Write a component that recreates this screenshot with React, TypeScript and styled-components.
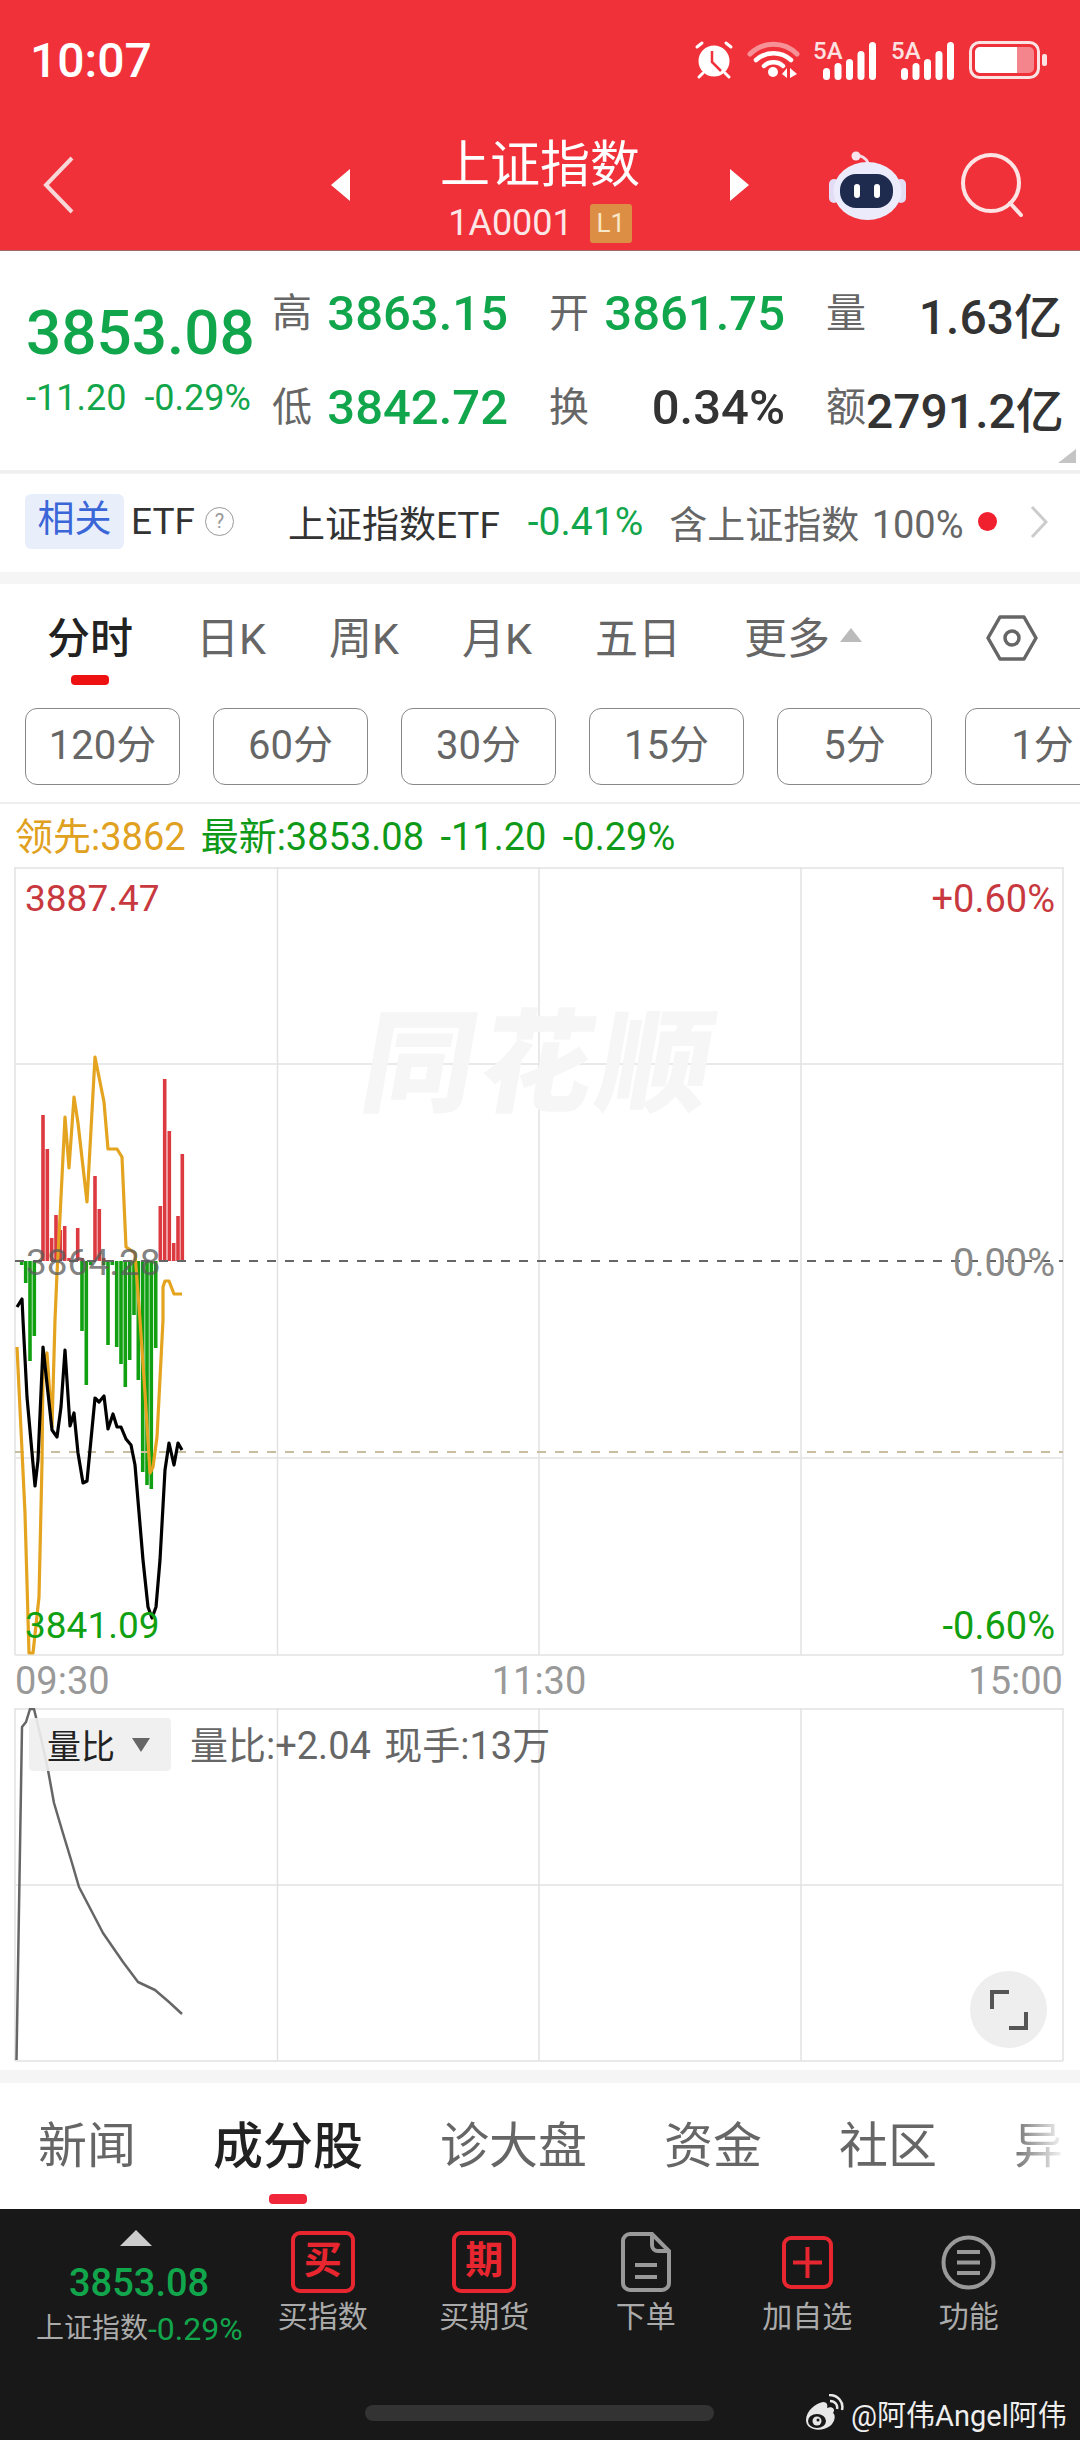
import styled, { createGlobalStyle } from "styled-components";

const FONT = `"Roboto", "Noto Sans CJK SC", sans-serif`;
const GREEN = "#12a64c";

const GlobalStyle = createGlobalStyle`
  html, body {
    margin: 0;
    padding: 0;
    background: #fff;
  }
  * {
    box-sizing: border-box;
  }
`;

const Page = styled.div`
  width: 1080px;
  height: 2440px;
  overflow: hidden;
  background: #fff;
  position: relative;
  font-family: ${FONT};
  color: #333;
`;

/* header */
const Header = styled.header`
  height: 251px;
  background: #f0313a;
  border-bottom: 1px solid #a06a6a;
  color: #fff;
`;

const StatusBar = styled.div`
  height: 120px;
  padding: 0 33px 0 30px;
  display: flex;
  align-items: center;
  justify-content: space-between;
`;

const Clock = styled.div`
  font-size: 48px;
  font-weight: 500;
`;

const StatusIcons = styled.div`
  display: flex;
  align-items: center;
  gap: 14px;

  svg {
    overflow: visible;
  }
`;

const Nav = styled.nav`
  height: 130px;
  display: grid;
  grid-template-columns: 1fr 418px 1fr;
  align-items: center;
`;

const BackSlot = styled.div`
  padding-left: 43px;
  display: flex;
`;

const NavCenter = styled.div`
  display: flex;
  align-items: center;
  justify-content: space-between;
`;

const NavTriangle = styled.div<{ $dir: "left" | "right" }>`
  width: 0;
  height: 0;
  border-top: 16px solid transparent;
  border-bottom: 16px solid transparent;
  ${(p) => (p.$dir === "left" ? "border-right: 19px solid #fff;" : "border-left: 19px solid #fff;")}
`;

const TitleBlock = styled.div`
  padding-top: 6px;
  display: flex;
  flex-direction: column;
  align-items: center;
`;

const Title = styled.div`
  font-size: 50px;
  line-height: 62px;
`;

const CodeRow = styled.div`
  margin-top: 8px;
  display: flex;
  align-items: center;
  gap: 17px;
  font-size: 36px;
  line-height: 39px;
  color: #fde6e6;
`;

const LevelBadge = styled.span`
  width: 42px;
  height: 39px;
  background: #dd8e45;
  border-radius: 3px;
  font-size: 26px;
  color: #f8e8c8;
  text-align: center;
`;

const NavRight = styled.div`
  display: flex;
  align-items: center;
  justify-content: flex-end;
  gap: 55px;
  padding-right: 57px;
`;

/* quote */
const Quote = styled.section`
  height: 222px;
  display: flex;
  position: relative;
  border-bottom: 3px solid #efefef;
`;

const PriceBlock = styled.div`
  width: 272px;
  padding: 47px 0 0 26px;
`;

const Price = styled.div`
  font-size: 62px;
  line-height: 70px;
  font-weight: 500;
  color: ${GREEN};
  white-space: nowrap;
`;

const ChangeRow = styled.div`
  margin-top: 10px;
  display: flex;
  gap: 18px;
  font-size: 36px;
  line-height: 40px;
  color: ${GREEN};
  white-space: nowrap;
`;

const QuoteGrid = styled.div`
  padding-top: 15px;
  display: grid;
  grid-template-columns: repeat(3, 236px);
  grid-auto-rows: 94px;
  column-gap: 41px;
`;

const QuoteCell = styled.div`
  display: flex;
  align-items: center;
  justify-content: space-between;
`;

const QuoteLabel = styled.span`
  margin-bottom: 6px;
  font-size: 40px;
  color: #666;
`;

const QuoteValue = styled.span<{ $dark?: boolean; $size?: number }>`
  font-size: ${(p) => p.$size ?? 49}px;
  font-weight: 500;
  color: ${(p) => (p.$dark ? "#333" : GREEN)};
  white-space: nowrap;
`;

const CornerMark = styled.div`
  position: absolute;
  right: 4px;
  bottom: 7px;
  width: 0;
  height: 0;
  border-left: 18px solid transparent;
  border-bottom: 14px solid #c4c4c4;
`;

/* etf strip */
const EtfRow = styled.section`
  height: 99px;
  padding: 0 0 3px 25px;
  display: flex;
  align-items: center;
  font-size: 37px;
  white-space: nowrap;
  border-top: 1px solid #f3f3f3;
`;

const EtfTag = styled.span`
  width: 99px;
  height: 55px;
  border-radius: 6px;
  background: #e8effb;
  color: #3b66d8;
  text-align: center;
  line-height: 52px;
`;

const EtfName = styled.span`
  margin-left: 7px;
  color: #333;
`;

const HelpMark = styled.span`
  margin-left: 10px;
  width: 29px;
  height: 29px;
  border-radius: 50%;
  border: 1.5px solid #999;
  color: #999;
  font-size: 20px;
  line-height: 26px;
  text-align: center;
`;

const EtfFund = styled.span`
  margin-left: 54px;
  color: #333;
`;

const EtfChange = styled.span`
  margin-left: 28px;
  font-size: 39px;
  color: ${GREEN};
`;

const EtfHold = styled.span`
  margin-left: 26px;
  font-size: 38px;
  word-spacing: 3px;
  color: #666;
`;

const RedDot = styled.span`
  margin-left: 14px;
  width: 19px;
  height: 19px;
  border-radius: 50%;
  background: #f0202e;
`;

const EtfArrow = styled.span`
  margin-left: 33px;
  display: flex;
`;

const Gap = styled.div<{ $h: number }>`
  height: ${(p) => p.$h}px;
  background: #f5f5f5;
`;

/* period tabs */
const PeriodTabs = styled.div`
  height: 106px;
  padding: 0 0 4px 47px;
  display: flex;
  align-items: center;
  gap: 63px;
  position: relative;
`;

const PeriodTab = styled.span<{ $active?: boolean }>`
  position: relative;
  font-size: 43px;
  font-weight: ${(p) => (p.$active ? 500 : 400)};
  color: ${(p) => (p.$active ? "#222" : "#666")};
  display: flex;
  align-items: center;

  ${(p) =>
    p.$active &&
    `&::after {
      content: "";
      position: absolute;
      left: 24px;
      top: 71px;
      width: 38px;
      height: 10px;
      border-radius: 4px;
      background: #ee1111;
    }`}
`;

const MoreCaret = styled.span`
  margin-left: 10px;
  width: 0;
  height: 0;
  border-left: 11px solid transparent;
  border-right: 11px solid transparent;
  border-bottom: 14px solid #bbb;
`;

const SettingSlot = styled.span`
  position: absolute;
  left: 986px;
  top: 31px;
  display: flex;
`;

const IntervalRow = styled.div`
  margin-top: 18px;
  padding: 0 0 17px 25px;
  display: flex;
  gap: 33px;
  overflow: hidden;
  border-bottom: 2px solid #eee;
`;

const IntervalButton = styled.div`
  flex: 0 0 155px;
  height: 77px;
  border: 1px solid #888;
  border-radius: 12px;
  font-size: 40px;
  line-height: 73px;
  color: #666;
  text-align: center;
`;

const Legend = styled.div`
  height: 63px;
  padding: 0 0 5px 15px;
  display: flex;
  align-items: center;
  gap: 15px;
  font-size: 38px;
  white-space: nowrap;
`;

const LegendItem = styled.span<{ $color: string }>`
  color: ${(p) => p.$color};
`;

const LegendLatest = styled.span`
  color: #0e9a18;
  word-spacing: 7px;
`;

/* charts */
const ChartBox = styled.div<{ $h: number }>`
  position: relative;
  height: ${(p) => p.$h}px;

  svg {
    display: block;
  }
`;

const ChartLabel = styled.span<{ $color: string; $top: number; $left?: number; $right?: number }>`
  position: absolute;
  top: ${(p) => p.$top}px;
  ${(p) => (p.$left !== undefined ? `left: ${p.$left}px;` : "")}
  ${(p) => (p.$right !== undefined ? `right: ${p.$right}px;` : "")}
  font-size: ${(p) => (p.$right !== undefined ? 38 : 37)}px;
  line-height: 44px;
  color: ${(p) => p.$color};
`;

const Watermark = styled.span`
  position: absolute;
  left: 364px;
  top: 133px;
  font-size: 112px;
  line-height: 130px;
  font-weight: 900;
  letter-spacing: 6px;
  color: #f6f6f6;
  transform: skewX(-10deg);
`;

const TimeAxis = styled.div`
  height: 52px;
  padding: 0 17px 2px 15px;
  display: flex;
  align-items: center;
  justify-content: space-between;
  font-size: 38px;
  color: #999;
`;

const RatioPill = styled.div`
  position: absolute;
  left: 29px;
  top: 10px;
  width: 142px;
  height: 53px;
  padding-left: 18px;
  border-radius: 4px;
  background: rgba(238, 238, 238, 0.9);
  display: flex;
  align-items: center;
  gap: 17px;
  font-size: 34px;
  color: #222;
`;

const PillCaret = styled.span`
  width: 0;
  height: 0;
  border-left: 9px solid transparent;
  border-right: 9px solid transparent;
  border-top: 14px solid #666;
`;

const RatioText = styled.div`
  position: absolute;
  left: 190px;
  top: 16px;
  font-size: 38px;
  line-height: 44px;
  color: #666;
  word-spacing: 4px;
  white-space: nowrap;
`;

const FullscreenButton = styled.div`
  position: absolute;
  left: 970px;
  top: 263px;
  width: 77px;
  height: 77px;
  border-radius: 50%;
  background: #eee;
  display: flex;
  align-items: center;
  justify-content: center;
`;

/* news tabs */
const NewsTabs = styled.div`
  position: relative;
  height: 126px;
  padding: 0 0 9px 38px;
  display: flex;
  align-items: center;
  gap: 77px;
  overflow: hidden;
  white-space: nowrap;

  &::after {
    content: "";
    position: absolute;
    right: 0;
    top: 0;
    width: 70px;
    height: 100%;
    background: linear-gradient(to right, rgba(255, 255, 255, 0), #fff 80%);
  }
`;

const NewsTab = styled.span<{ $active?: boolean }>`
  position: relative;
  flex-shrink: 0;
  font-size: ${(p) => (p.$active ? 50 : 49)}px;
  font-weight: ${(p) => (p.$active ? 500 : 400)};
  color: ${(p) => (p.$active ? "#222" : "#666")};

  ${(p) =>
    p.$active &&
    `&::after {
      content: "";
      position: absolute;
      left: 56px;
      top: 88px;
      width: 38px;
      height: 10px;
      border-radius: 4px;
      background: #f0263a;
    }`}
`;

/* bottom bar */
const BottomBar = styled.footer`
  position: relative;
  height: 231px;
  background: #181818;
  display: flex;
`;

const BarQuote = styled.div`
  width: 242px;
  padding: 21px 0 0 36px;
  display: flex;
  flex-direction: column;
`;

const BarCaret = styled.div`
  margin-left: 84px;
  width: 0;
  height: 0;
  border-left: 16px solid transparent;
  border-right: 16px solid transparent;
  border-bottom: 16px solid #ccc;
`;

const BarPrice = styled.div`
  margin: 12px 0 0 33px;
  font-size: 38px;
  line-height: 50px;
  font-weight: 500;
  color: ${GREEN};
`;

const BarName = styled.div`
  display: flex;
  font-size: 28px;
  line-height: 42px;
  color: #aaa;
  white-space: nowrap;
`;

const BarChange = styled.span`
  color: ${GREEN};
  font-size: 32px;
`;

const BarItem = styled.div`
  width: 161.5px;
  padding-top: 20px;
  display: flex;
  flex-direction: column;
  align-items: center;
`;

const BarIcon = styled.div`
  height: 66px;
  display: flex;
  align-items: center;
  justify-content: center;
`;

const BarLabel = styled.div`
  font-size: 30px;
  line-height: 44px;
  color: #aaa;
`;

const BuyBox = styled.div`
  width: 64px;
  height: 62px;
  border: 4px solid #e8262f;
  border-radius: 9px;
  color: #e8262f;
  font-size: 38px;
  line-height: 50px;
  font-weight: 700;
  text-align: center;
`;

const HomeBar = styled.div`
  position: absolute;
  left: 365px;
  top: 196px;
  width: 349px;
  height: 16px;
  border-radius: 8px;
  background: #333;
`;

const Credit = styled.div`
  position: absolute;
  left: 802px;
  top: 183px;
  display: flex;
  align-items: center;
  gap: 7px;
  font-size: 29px;
  color: #eee;
  white-space: nowrap;
`;

/* drawn icons */
const AlarmIcon = () => (
  <svg width="40" height="40" viewBox="0 0 40 40">
    <circle cx="20" cy="21" r="15.5" fill="#fff" />
    <path d="M3 7 L8 3 M37 7 L32 3 M5 37 L9 33 M35 37 L31 33" stroke="#fff" strokeWidth="3" strokeLinecap="round" />
    <path d="M18 11 V22 L27 31" stroke="#f0313a" strokeWidth="2.5" fill="none" />
  </svg>
);

const WifiIcon = () => (
  <svg width="51" height="38" viewBox="0 0 51 38" fill="none" strokeLinecap="round">
    <path d="M2 13 C15 0 36 0 49 13" stroke="#f79198" strokeWidth="5" />
    <path d="M8 19 C18 10 33 10 43 19" stroke="#fff" strokeWidth="4.5" />
    <path d="M16 25 C21 20 30 20 35 25" stroke="#fff" strokeWidth="4.5" />
    <circle cx="25" cy="31" r="5" fill="#fff" />
    <path d="M39 27 L39 37 L34 33 Z M42 27 L42 37 L49 33 Z" fill="#fff" />
  </svg>
);

const SignalIcon = () => (
  <svg width="64" height="40" viewBox="0 0 64 40">
    <text x="0" y="19" fontSize="24" fontWeight="500" fill="#fde0e0" fontFamily="Roboto, sans-serif">
      5A
    </text>
    <rect x="10" y="28" width="7" height="12" rx="3.5" fill="#fff" />
    <rect x="21.5" y="23" width="7" height="17" rx="3.5" fill="#fff" />
    <rect x="33" y="19" width="7" height="21" rx="3.5" fill="#fff" />
    <rect x="44.5" y="11" width="7" height="29" rx="3.5" fill="#fff" />
    <rect x="56" y="2" width="7" height="38" rx="3.5" fill="#fff" />
  </svg>
);

const BatteryIcon = () => (
  <svg width="78" height="38" viewBox="0 0 78 38">
    <rect x="1.5" y="1.5" width="68" height="35" rx="9" fill="none" stroke="#fbe3e4" strokeWidth="3" />
    <rect x="6" y="6" width="59" height="26" rx="5" fill="#f5858c" />
    <path d="M11 6 H48 V32 H11 A5 5 0 0 1 6 27 V11 A5 5 0 0 1 11 6 Z" fill="#fff" />
    <rect x="73" y="13" width="5" height="12" rx="2" fill="#fbe3e4" />
  </svg>
);

const BackIcon = () => (
  <svg width="32" height="58" viewBox="0 0 32 58" fill="none">
    <path d="M29 2 L3 29 L29 56" stroke="#f8d7d8" strokeWidth="4" />
  </svg>
);

const RobotIcon = () => (
  <svg width="77" height="70" viewBox="0 0 77 70">
    <path d="M27 6 C32 5 37 8 39 13" stroke="#f4dbe6" strokeWidth="3" fill="none" />
    <circle cx="27" cy="6" r="4.5" fill="#f7e4ec" />
    <rect x="0" y="29" width="10" height="24" rx="5" fill="#e3dcf5" />
    <rect x="67" y="29" width="10" height="24" rx="5" fill="#e3dcf5" />
    <ellipse cx="38.5" cy="41" rx="34" ry="29" fill="#ecebfb" />
    <rect x="11" y="24" width="53" height="34" rx="16" fill="#1e2b4f" />
    <rect x="25" y="34" width="6" height="14" rx="3" fill="#fff" />
    <rect x="45" y="34" width="6" height="14" rx="3" fill="#fff" />
  </svg>
);

const SearchIcon = () => (
  <svg width="62" height="64" viewBox="0 0 62 64" fill="none">
    <circle cx="30" cy="30" r="28" stroke="#fde3e3" strokeWidth="4" />
    <path d="M49 50 L60 62" stroke="#fde3e3" strokeWidth="4" strokeLinecap="round" />
  </svg>
);

const SmallChevron = () => (
  <svg width="18" height="34" viewBox="0 0 18 34" fill="none">
    <path d="M2 2 L16 17 L2 32" stroke="#ccc" strokeWidth="3" />
  </svg>
);

const HexIcon = () => (
  <svg width="52" height="46" viewBox="0 0 52 46" fill="none" stroke="#666" strokeWidth="3.5">
    <path d="M14 2 H38 L50 23 L38 44 H14 L2 23 Z" strokeLinejoin="round" />
    <circle cx="26" cy="23" r="7" />
  </svg>
);

const FullscreenIcon = () => (
  <svg width="38" height="40" viewBox="0 0 38 40" fill="none" stroke="#555" strokeWidth="4">
    <path d="M2 19 V2 H19" />
    <path d="M36 22 V38 H19" />
  </svg>
);

const DocIcon = () => (
  <svg width="50" height="60" viewBox="0 0 50 60" fill="none" stroke="#999" strokeWidth="4">
    <path d="M31 2 H9 A7 7 0 0 0 2 9 V51 A7 7 0 0 0 9 58 H41 A7 7 0 0 0 48 51 V19 Z" />
    <path d="M31 2 V13 A6 6 0 0 0 37 19 H48" />
    <path d="M14 33 H36 M14 45 H36" />
  </svg>
);

const AddIcon = () => (
  <svg width="51" height="53" viewBox="0 0 51 53" fill="none" stroke="#e8262f" strokeWidth="4">
    <rect x="2" y="2" width="47" height="49" rx="7" />
    <path d="M25.5 11 V42 M11 26.5 H40" />
  </svg>
);

const MenuIcon = () => (
  <svg width="55" height="55" viewBox="0 0 55 55" fill="none" stroke="#999" strokeWidth="4">
    <circle cx="27.5" cy="27.5" r="25" />
    <path d="M16 17 H39 M16 27.5 H39 M16 38 H39" />
  </svg>
);

const WeiboIcon = () => (
  <svg width="42" height="38" viewBox="0 0 42 38">
    <path
      d="M4 26 C4 17 14 9 21 8 C25 8 26 11 25 14 C30 12 34 15 31 19 C34 21 33 28 28 32 C20 38 4 37 4 26 Z"
      fill="#e8e8e8"
    />
    <ellipse cx="15" cy="27" rx="9" ry="7" fill="#181818" />
    <circle cx="15" cy="27" r="4.5" fill="#e8e8e8" />
    <circle cx="16" cy="26" r="1.5" fill="#181818" />
    <path d="M28 7 C33 7 36 11 35 15 M27 1 C36 1 42 8 40 16" stroke="#e8e8e8" strokeWidth="2.5" fill="none" />
  </svg>
);

/* chart data, in page pixels */
const redBars: [number, number][] = [
  [43, 1115], [47.3, 1149], [51.7, 1238], [56, 1215], [60.3, 1230], [64.7, 1226], [69, 1258],
  [77.7, 1228], [82, 1258], [95, 1176], [99.3, 1209], [103.7, 1258],
  [160.3, 1206], [164.7, 1079], [169.3, 1131], [173.7, 1243], [178, 1216], [182.3, 1154],
];

const greenBars: [number, number][] = [
  [21.7, 1265], [25.7, 1283], [30, 1361], [34.3, 1336], [82, 1331], [86.3, 1385], [90.7, 1265],
  [103.7, 1265], [108, 1345], [112.3, 1265], [116.7, 1347], [121, 1364], [125.3, 1387], [129.7, 1360],
  [134, 1315], [138.3, 1380], [142.7, 1472], [147, 1485], [151.3, 1489], [155.7, 1348],
];

const leadLine =
  "17,1347 25,1513 29,1653 33,1653 39,1597 42,1463 43,1370 47,1353 52,1427 55,1320 57,1273 59,1237 65,1117 69,1168 74,1097 78,1123 87,1202 95,1057 104,1102 108,1149 117,1149 122,1157 126,1247 135,1253 140,1320 145,1393 150,1473 153,1467 157,1437 163,1320 163,1287 165,1281 169,1281 174,1294 182,1294";

const priceLine =
  "17,1307 22,1299 23,1320 27,1397 35,1486 38,1460 43,1347 52,1430 57,1437 61,1407 65,1350 70,1426 74,1413 78,1453 83,1483 87,1481 95,1398 99,1402 104,1396 108,1429 113,1414 117,1427 121,1427 126,1439 131,1445 135,1465 143,1560 148,1607 152,1618 156,1607 160,1560 165,1470 169,1443 174,1465 178,1443 182,1450";

const ratioLine =
  "16.5,2060 22,1727 26,1722 30,1709 34,1709 41,1738 48,1770 54,1803 62,1830 72,1863 79,1887 91,1910 103,1933 123,1962 138,1982 155,1990 169,2002 182,2014";

const gridX = [15, 277.5, 539, 801, 1063];
const GRID = "#e2e2e2";

const PriceChart = () => (
  <svg width="1080" height="789" viewBox="0 867 1080 789">
    <path d="M15 868 H1063 M15 1064 H1063 M15 1458 H1063 M15 1655 H1063" stroke={GRID} strokeWidth="1.5" />
    {gridX.map((x) => (
      <path key={x} d={`M${x} 867 V1655`} stroke={GRID} strokeWidth="1.5" />
    ))}
    {redBars.map(([x, y]) => (
      <rect key={x} x={x - 1.8} y={y} width="3.6" height={1261 - y} fill="#dc3a40" />
    ))}
    {greenBars.map(([x, y]) => (
      <rect key={x} x={x - 1.8} y="1261" width="3.6" height={y - 1261} fill="#11a011" />
    ))}
    <path d="M15 1261 H1063" stroke="#666" strokeWidth="2" strokeDasharray="9 9" />
    <path d="M15 1452 H1063" stroke="#c9bd9f" strokeWidth="2" strokeDasharray="9 9" />
    <polyline points={leadLine} fill="none" stroke="#e4a41f" strokeWidth="3.2" strokeLinejoin="round" />
    <polyline points={priceLine} fill="none" stroke="#000" strokeWidth="3.2" strokeLinejoin="round" />
  </svg>
);

const RatioChart = () => (
  <svg width="1080" height="354" viewBox="0 1708 1080 354">
    <path d="M15 1709 H1063 M15 1885 H1063 M15 2061 H1063" stroke={GRID} strokeWidth="1.5" />
    {gridX.map((x) => (
      <path key={x} d={`M${x} 1708 V2061`} stroke={GRID} strokeWidth="1.5" />
    ))}
    <polyline points={ratioLine} fill="none" stroke="#666" strokeWidth="2.5" strokeLinejoin="round" />
  </svg>
);

const periods = ["日K", "周K", "月K", "五日"];
const intervals = ["120分", "60分", "30分", "15分", "5分", "1分"];
const newsTabs = ["新闻", "成分股", "诊大盘", "资金", "社区", "异动"];

export default function App() {
  return (
    <Page>
      <GlobalStyle />
      <Header>
        <StatusBar>
          <Clock>10:07</Clock>
          <StatusIcons>
            <AlarmIcon />
            <WifiIcon />
            <SignalIcon />
            <SignalIcon />
            <BatteryIcon />
          </StatusIcons>
        </StatusBar>
        <Nav>
          <BackSlot>
            <BackIcon />
          </BackSlot>
          <NavCenter>
            <NavTriangle $dir="left" />
            <TitleBlock>
              <Title>上证指数</Title>
              <CodeRow>
                1A0001
                <LevelBadge>L1</LevelBadge>
              </CodeRow>
            </TitleBlock>
            <NavTriangle $dir="right" />
          </NavCenter>
          <NavRight>
            <RobotIcon />
            <SearchIcon />
          </NavRight>
        </Nav>
      </Header>

      <Quote>
        <PriceBlock>
          <Price>3853.08</Price>
          <ChangeRow>
            <span>-11.20</span>
            <span>-0.29%</span>
          </ChangeRow>
        </PriceBlock>
        <QuoteGrid>
          <QuoteCell>
            <QuoteLabel>高</QuoteLabel>
            <QuoteValue>3863.15</QuoteValue>
          </QuoteCell>
          <QuoteCell>
            <QuoteLabel>开</QuoteLabel>
            <QuoteValue>3861.75</QuoteValue>
          </QuoteCell>
          <QuoteCell>
            <QuoteLabel>量</QuoteLabel>
            <QuoteValue $dark $size={48}>1.63亿</QuoteValue>
          </QuoteCell>
          <QuoteCell>
            <QuoteLabel>低</QuoteLabel>
            <QuoteValue>3842.72</QuoteValue>
          </QuoteCell>
          <QuoteCell>
            <QuoteLabel>换</QuoteLabel>
            <QuoteValue $dark>0.34%</QuoteValue>
          </QuoteCell>
          <QuoteCell>
            <QuoteLabel>额</QuoteLabel>
            <QuoteValue $dark $size={48}>2791.2亿</QuoteValue>
          </QuoteCell>
        </QuoteGrid>
        <CornerMark />
      </Quote>

      <EtfRow>
        <EtfTag>相关</EtfTag>
        <EtfName>ETF</EtfName>
        <HelpMark>?</HelpMark>
        <EtfFund>上证指数ETF</EtfFund>
        <EtfChange>-0.41%</EtfChange>
        <EtfHold>含上证指数 100%</EtfHold>
        <RedDot />
        <EtfArrow>
          <SmallChevron />
        </EtfArrow>
      </EtfRow>
      <Gap $h={12} />

      <PeriodTabs>
        <PeriodTab $active>分时</PeriodTab>
        {periods.map((p) => (
          <PeriodTab key={p}>{p}</PeriodTab>
        ))}
        <PeriodTab>
          更多
          <MoreCaret />
        </PeriodTab>
        <SettingSlot>
          <HexIcon />
        </SettingSlot>
      </PeriodTabs>

      <IntervalRow>
        {intervals.map((i) => (
          <IntervalButton key={i}>{i}</IntervalButton>
        ))}
      </IntervalRow>

      <Legend>
        <LegendItem $color="#e0a020">领先:3862</LegendItem>
        <LegendLatest>最新:3853.08 -11.20 -0.29%</LegendLatest>
      </Legend>

      <ChartBox $h={789}>
        <PriceChart />
        <Watermark>同花顺</Watermark>
        <ChartLabel $color="#c8393f" $top={10} $left={25}>3887.47</ChartLabel>
        <ChartLabel $color="#c8393f" $top={10} $right={25}>+0.60%</ChartLabel>
        <ChartLabel $color="rgba(90,90,90,0.75)" $top={374} $left={26}>3864.28</ChartLabel>
        <ChartLabel $color="#888" $top={374} $right={25}>0.00%</ChartLabel>
        <ChartLabel $color="#11a011" $top={737} $left={25}>3841.09</ChartLabel>
        <ChartLabel $color="#11a011" $top={737} $right={25}>-0.60%</ChartLabel>
      </ChartBox>

      <TimeAxis>
        <span>09:30</span>
        <span>11:30</span>
        <span>15:00</span>
      </TimeAxis>

      <ChartBox $h={362}>
        <RatioChart />
        <RatioPill>
          量比
          <PillCaret />
        </RatioPill>
        <RatioText>量比:+2.04 现手:13万</RatioText>
        <FullscreenButton>
          <FullscreenIcon />
        </FullscreenButton>
      </ChartBox>
      <Gap $h={13} />

      <NewsTabs>
        {newsTabs.map((t) => (
          <NewsTab key={t} $active={t === "成分股"}>
            {t}
          </NewsTab>
        ))}
      </NewsTabs>

      <BottomBar>
        <BarQuote>
          <BarCaret />
          <BarPrice>3853.08</BarPrice>
          <BarName>
            上证指数<BarChange>-0.29%</BarChange>
          </BarName>
        </BarQuote>
        <BarItem>
          <BarIcon>
            <BuyBox>买</BuyBox>
          </BarIcon>
          <BarLabel>买指数</BarLabel>
        </BarItem>
        <BarItem>
          <BarIcon>
            <BuyBox>期</BuyBox>
          </BarIcon>
          <BarLabel>买期货</BarLabel>
        </BarItem>
        <BarItem>
          <BarIcon>
            <DocIcon />
          </BarIcon>
          <BarLabel>下单</BarLabel>
        </BarItem>
        <BarItem>
          <BarIcon>
            <AddIcon />
          </BarIcon>
          <BarLabel>加自选</BarLabel>
        </BarItem>
        <BarItem>
          <BarIcon>
            <MenuIcon />
          </BarIcon>
          <BarLabel>功能</BarLabel>
        </BarItem>
        <HomeBar />
        <Credit>
          <WeiboIcon />
          @阿伟Angel阿伟
        </Credit>
      </BottomBar>
    </Page>
  );
}
